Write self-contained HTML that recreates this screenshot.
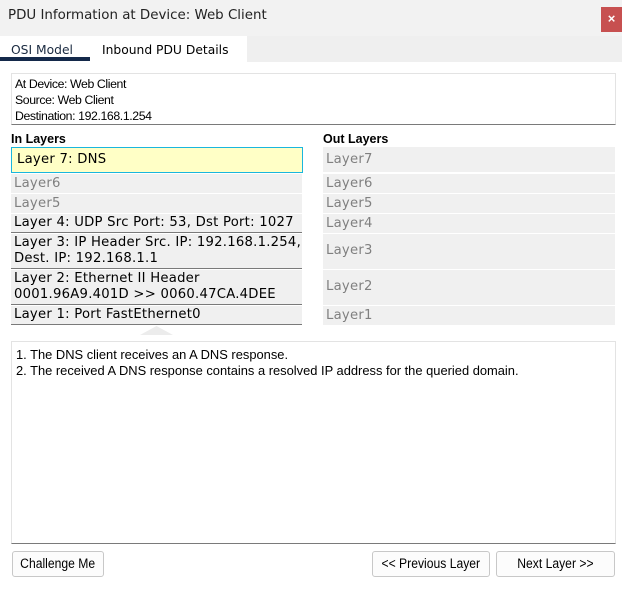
<html><head><style>
body{margin:0;width:622px;height:601px;background:#fff;font-family:"Liberation Sans",sans-serif;position:relative;overflow:hidden}
.a{position:absolute;box-sizing:border-box}
.t{font-family:"DejaVu Sans",sans-serif;font-size:13.2px;line-height:16px;color:#000;white-space:nowrap;letter-spacing:0.25px}
.row{background:#f0f0f0;padding:2px 0 0 3px}
.g{color:#808080}
.bb{border-bottom:1px solid #7a7a7a}
.btn{border:1px solid #c8c8c8;border-radius:3px;background:#fcfcfc;font-size:13.5px;text-align:center;line-height:24px}
.btn span{display:inline-block;transform:scaleX(.9)}
</style></head><body>
<div class="a" style="left:0;top:0;width:622px;height:36px;background:#f2f2f2"></div>
<div class="a" style="left:8px;top:8px;color:#222;font-family:'DejaVu Sans',sans-serif;font-size:13.4px">PDU Information at Device: Web Client</div>
<div class="a" style="left:601px;top:7px;width:21px;height:25px;background:#c75050;color:#fff;font-size:13px;font-weight:bold;text-align:center;line-height:24px">×</div>
<div class="a" style="left:247px;top:36px;width:375px;height:26px;background:#efefef"></div>
<div class="a t" style="left:11px;top:42px;font-size:12.3px;color:#1a2a40;letter-spacing:0">OSI Model</div>
<div class="a" style="left:0;top:57px;width:90px;height:4px;background:#14294a"></div>
<div class="a t" style="left:102px;top:42px;font-size:12.3px;letter-spacing:0">Inbound PDU Details</div>
<div class="a" style="left:11px;top:73px;width:605px;height:52px;border:1px solid #e3e3e3;border-bottom:1px solid #7a7a7a;padding:2px 0 0 3px;font-size:12.3px;line-height:16px;letter-spacing:-0.4px">At Device: Web Client<br>Source: Web Client<br>Destination: 192.168.1.254</div>
<div class="a" style="left:11px;top:132px;font-weight:bold;font-size:12.5px">In Layers</div>
<div class="a" style="left:323px;top:132px;font-weight:bold;font-size:12.5px">Out Layers</div>
<div class="a t" style="left:11px;top:147px;width:292px;height:26px;background:#ffffc6;border:1px solid #1ab6dd;padding:4px 0 0 5px">Layer 7: DNS</div>
<div class="a t row g" style="left:11px;top:174px;width:291px;height:19px">Layer6</div>
<div class="a t row g" style="left:11px;top:194px;width:291px;height:19px">Layer5</div>
<div class="a t row bb" style="left:11px;top:214px;width:291px;height:19px;padding-top:1px">Layer 4: UDP Src Port: 53, Dst Port: 1027</div>
<div class="a t row bb" style="left:11px;top:234px;width:291px;height:35px;padding-top:1px">Layer 3: IP Header Src. IP: 192.168.1.254,<br>Dest. IP: 192.168.1.1</div>
<div class="a t row bb" style="left:11px;top:270px;width:291px;height:35px;padding-top:1px">Layer 2: Ethernet II Header<br>0001.96A9.401D &gt;&gt; 0060.47CA.4DEE</div>
<div class="a t row bb" style="left:11px;top:306px;width:291px;height:19px;padding-top:1px">Layer 1: Port FastEthernet0</div>
<div class="a" style="left:140px;top:326px;width:33px;height:9px;background:#ececec;clip-path:polygon(0 100%,50% 0,100% 100%)"></div>
<div class="a t row g" style="left:323px;top:147px;width:292px;height:25px;padding-top:5px">Layer7</div>
<div class="a t row g" style="left:323px;top:174px;width:292px;height:19px">Layer6</div>
<div class="a t row g" style="left:323px;top:194px;width:292px;height:19px">Layer5</div>
<div class="a t row g" style="left:323px;top:214px;width:292px;height:19px">Layer4</div>
<div class="a t row g" style="left:323px;top:234px;width:292px;height:35px;padding-top:9px">Layer3</div>
<div class="a t row g" style="left:323px;top:270px;width:292px;height:35px;padding-top:9px">Layer2</div>
<div class="a t row g" style="left:323px;top:306px;width:292px;height:19px">Layer1</div>
<div class="a" style="left:11px;top:341px;width:605px;height:203px;border:1px solid #e3e3e3;border-bottom:1px solid #7a7a7a;padding:5px 0 0 4px;font-size:12.9px;line-height:16px">1. The DNS client receives an A DNS response.<br>2. The received A DNS response contains a resolved IP address for the queried domain.</div>
<div class="a btn" style="left:12px;top:551px;width:92px;height:26px"><span>Challenge Me</span></div>
<div class="a btn" style="left:372px;top:551px;width:118px;height:26px"><span>&lt;&lt; Previous Layer</span></div>
<div class="a btn" style="left:496px;top:551px;width:119px;height:26px"><span>Next Layer &gt;&gt;</span></div>
</body></html>
